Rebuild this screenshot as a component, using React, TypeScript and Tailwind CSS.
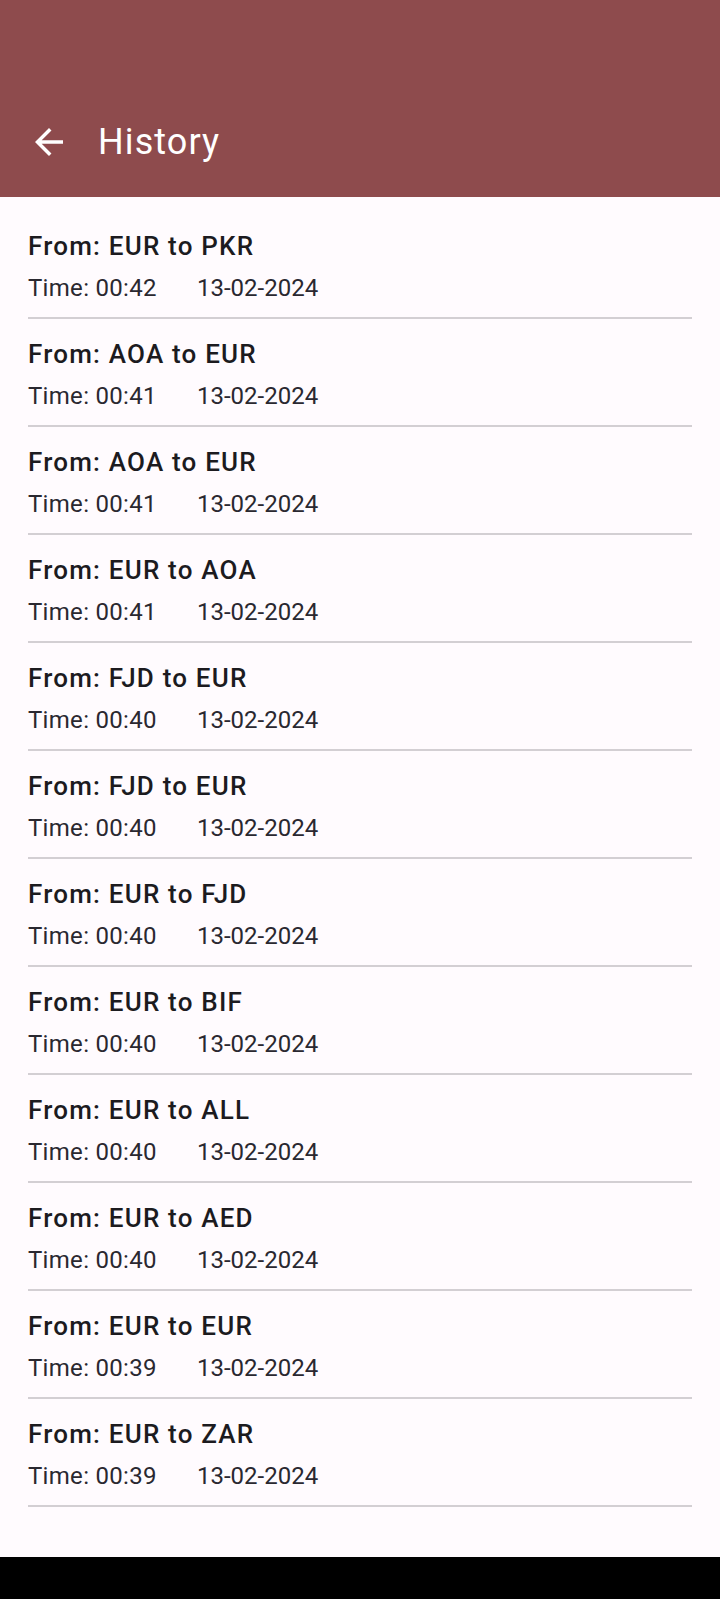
import React from "react";

const rows: [string, string][] = [
  ["EUR to PKR", "00:42"],
  ["AOA to EUR", "00:41"],
  ["AOA to EUR", "00:41"],
  ["EUR to AOA", "00:41"],
  ["FJD to EUR", "00:40"],
  ["FJD to EUR", "00:40"],
  ["EUR to FJD", "00:40"],
  ["EUR to BIF", "00:40"],
  ["EUR to ALL", "00:40"],
  ["EUR to AED", "00:40"],
  ["EUR to EUR", "00:39"],
  ["EUR to ZAR", "00:39"],
];

export default function App() {
  return (
    <div
      className="w-[720px] h-[1599px] flex flex-col bg-[#fffbfe] overflow-hidden"
      style={{ fontFamily: "Roboto, 'Noto Sans', sans-serif" }}
    >
      <div className="h-[197px] shrink-0 bg-[#8e4b4d] pt-[121px]">
        <div className="flex items-center h-[42px] pl-[28px]">
          <svg width="42" height="42" viewBox="0 0 24 24" fill="#ffffff">
            <path d="M20 11H7.83l5.59-5.59L12 4l-8 8 8 8 1.41-1.41L7.83 13H20v-2z" />
          </svg>
          <span className="ml-[28px] text-[36px] leading-[42px] tracking-[1.1px] text-white">History</span>
        </div>
      </div>
      <div className="flex-1 pt-[14px]">
        {rows.map(([pair, time], i) => (
          <div key={i} className="px-[28px]">
            <div className="pt-[19px] text-[26px] leading-[32px] font-medium tracking-[1.2px] text-[#1c1b1f]">
              From: {pair}
            </div>
            <div className="mt-[12px] flex text-[24px] leading-[28px] text-[#2a2830]">
              <span className="w-[169px] tracking-[0.3px]">Time: {time}</span>
              <span>13-02-2024</span>
            </div>
            <div className="mt-[15px] h-[2px] bg-[#d3cfd3]" />
          </div>
        ))}
      </div>
      <div className="h-[42px] shrink-0 bg-black" />
    </div>
  );
}
